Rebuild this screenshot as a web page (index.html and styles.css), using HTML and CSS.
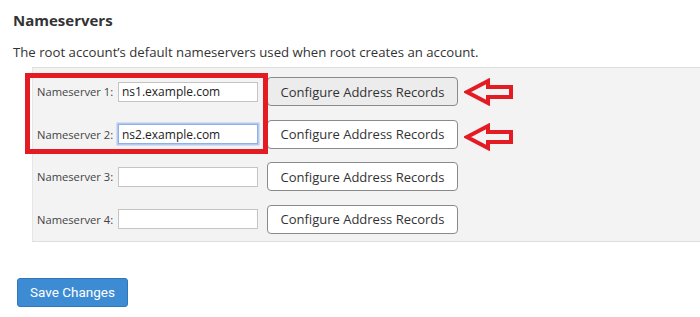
FILE: index.html
```html
<!DOCTYPE html>
<html lang="en">
<head>
    <meta charset="UTF-8">
    <title>Nameservers</title>
    <link rel="stylesheet" href="styles.css">
</head>
<body>
    <h2 class="section-title">Nameservers</h2>
    <p class="section-desc">The root account’s default nameservers used when root creates an account.</p>

    <div class="ns-panel">
        <div class="ns-row">
            <label class="ns-label" for="ns1">Nameserver 1:</label>
            <input class="ns-input" type="text" id="ns1" value="ns1.example.com">
            <button class="btn btn-config is-hover">Configure Address Records</button>
        </div>
        <div class="ns-row">
            <label class="ns-label" for="ns2">Nameserver 2:</label>
            <input class="ns-input is-focus" type="text" id="ns2" value="ns2.example.com">
            <button class="btn btn-config">Configure Address Records</button>
        </div>
        <div class="ns-row">
            <label class="ns-label" for="ns3">Nameserver 3:</label>
            <input class="ns-input" type="text" id="ns3">
            <button class="btn btn-config">Configure Address Records</button>
        </div>
        <div class="ns-row">
            <label class="ns-label" for="ns4">Nameserver 4:</label>
            <input class="ns-input" type="text" id="ns4">
            <button class="btn btn-config">Configure Address Records</button>
        </div>

        <!-- annotation overlay -->
        <div class="mark-box"></div>
        <svg class="mark-arrow arrow-1" width="50" height="28" viewBox="0 0 50 28">
            <path d="M3 14 L24 3 L24 9 L47 9 L47 19 L24 19 L24 25 Z" fill="none" stroke="#e31b23" stroke-width="4" stroke-linejoin="miter"/>
        </svg>
        <svg class="mark-arrow arrow-2" width="50" height="28" viewBox="0 0 50 28">
            <path d="M3 14 L24 3 L24 9 L47 9 L47 19 L24 19 L24 25 Z" fill="none" stroke="#e31b23" stroke-width="4" stroke-linejoin="miter"/>
        </svg>
    </div>

    <div class="form-actions">
        <button class="btn btn-primary">Save Changes</button>
    </div>
</body>
</html>
```

FILE: styles.css
```css
body {
    font-family: 'Open Sans', sans-serif;
    margin: 0;
    padding: 10px 0 0 13px;
    background-color: #fff;
    color: #333;
}

.section-title {
    font-size: 15px;
    font-weight: bold;
    margin: 0;
    line-height: 20px;
}

.section-desc {
    font-size: 13.2px;
    margin: 12px 0 0 0;
    line-height: 20px;
}

/* Nameserver panel */
.ns-panel {
    position: relative;
    margin: 5px 0 0 19px;
    padding: 9px 0 7px 4px;
    background: #f3f3f3;
    border-top: 1px solid #dedede;
    border-bottom: 1px solid #dedede;
    border-left: 1px solid #e6e6e6;
    display: flex;
    flex-direction: column;
    gap: 13.5px;
}

.ns-row {
    display: flex;
    align-items: center;
    height: 29px;
}

.ns-label {
    flex-shrink: 0;
    width: 81px;
    white-space: nowrap;
    font-size: 11.2px;
    color: #444;
}

.ns-input {
    flex-shrink: 0;
    width: 140px;
    height: 20px;
    box-sizing: border-box;
    margin: 0;
    padding: 0 3px;
    border: 1px solid #c4c4c4;
    background: #fff;
    font-family: 'Open Sans', sans-serif;
    font-size: 12px;
    color: #222;
    outline: none;
}

.ns-input.is-focus {
    border: 1px solid #8fb0e6;
    box-shadow: 0 0 0 1.5px #b3c9ef;
}

.btn {
    font-family: 'Open Sans', sans-serif;
    cursor: pointer;
}

.btn-config {
    flex-shrink: 0;
    margin-left: 9px;
    width: 191px;
    height: 29px;
    padding: 0;
    background: #fff;
    border: 1px solid #8a8a8a;
    border-radius: 4px;
    font-size: 13px;
    color: #333;
}

.btn-config.is-hover {
    background: #ececec;
}

/* annotation marks */
.mark-box {
    position: absolute;
    left: -8px;
    top: 5px;
    width: 233px;
    height: 71px;
    border: 5px solid #e31b23;
}

.mark-arrow {
    position: absolute;
    left: 431px;
}

.arrow-1 { top: 10px; }
.arrow-2 { top: 55px; }

.form-actions {
    margin-top: 36px;
}

.btn-primary {
    margin-left: 4px;
    width: 111px;
    height: 29px;
    padding: 0;
    background: #3d8bd3;
    border: 1px solid #2f77bb;
    border-radius: 3px;
    color: #fff;
    font-family: 'Roboto', sans-serif;
    font-size: 13.5px;
}
```
